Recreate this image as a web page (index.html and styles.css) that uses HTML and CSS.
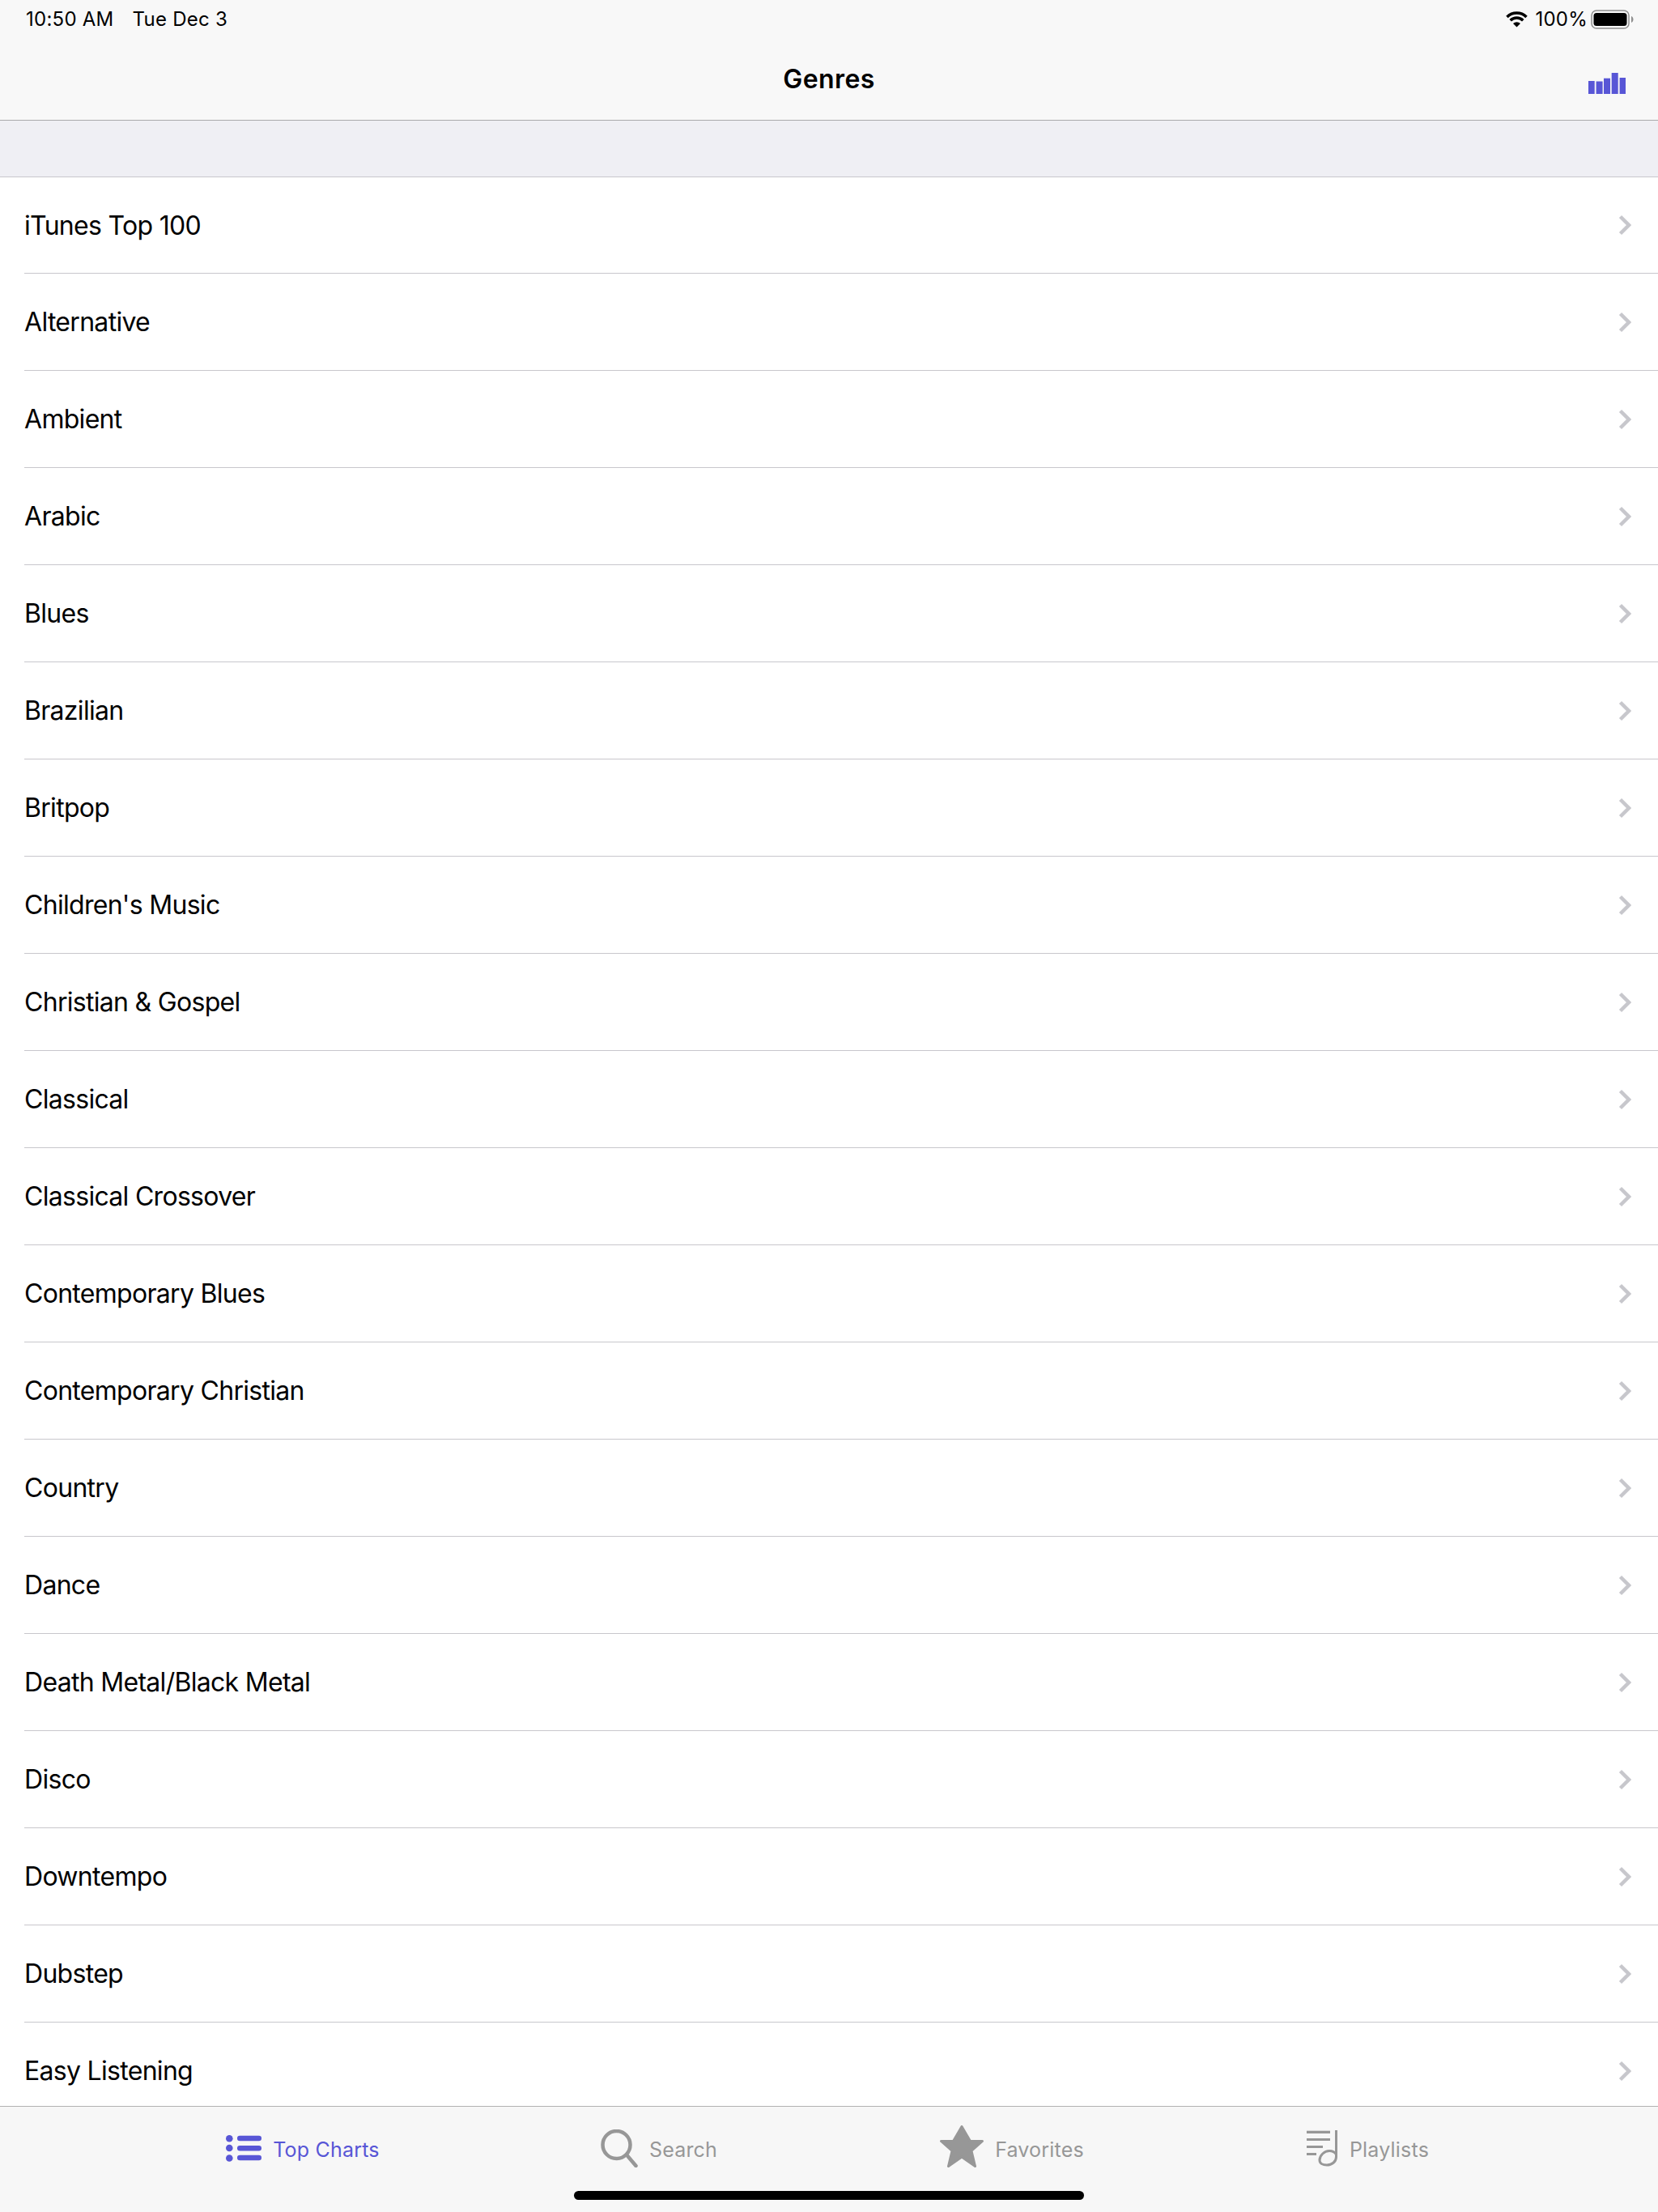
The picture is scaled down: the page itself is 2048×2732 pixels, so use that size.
FILE: index.html
```html
<!DOCTYPE html>
<html lang="en">
<head>
<meta charset="utf-8">
<title>Genres</title>
<link rel="stylesheet" href="styles.css">
</head>
<body>
<div class="app">
  <header class="nav">
    <div class="status">
      <div class="status-left"><span>10:50 AM</span><span>Tue Dec 3</span></div>
      <div class="status-right">
        <svg class="wifi" width="27" height="20" viewBox="0 0 27 20"><path class="wifi-arc" d="M1.500 7A17 17 0 0 1 25.500 7"/><path class="wifi-arc" d="M5.700 11.200A11 11 0 0 1 21.300 11.200"/><path d="M13.500 19.500 9 15A6.400 6.400 0 0 1 18 15Z"/></svg>
        <span class="pct">100%</span>
        <svg class="battery" width="54" height="24" viewBox="0 0 54 24"><rect class="batt-shell" x="1" y="1" width="46" height="22" rx="6"/><rect x="3.500" y="4" width="41" height="16" rx="3.500"/><path class="batt-nub" d="M50 8c1.500.6 2.500 2.200 2.500 4s-1 3.400-2.500 4z"/></svg>
      </div>
    </div>
    <div class="nav-bar">
      <h1 class="title">Genres</h1>
      <svg class="bars" width="46" height="26" viewBox="0 0 46 26"><rect x="0" y="10" width="7.700" height="16"/><rect x="9.600" y="10.500" width="8" height="15.500"/><rect x="19" y="6.700" width="8" height="19.300"/><rect x="28.700" y="0" width="8" height="26"/><rect x="38.600" y="6" width="7.400" height="20"/></svg>
    </div>
  </header>
  <div class="spacer"></div>
  <main class="list">
    <div class="row"><span>iTunes Top 100</span><svg class="chev" width="16" height="26" viewBox="0 0 16 26"><path d="M2.500 2.500 13 13 2.500 23.500"/></svg></div>
    <div class="row"><span>Alternative</span><svg class="chev" width="16" height="26" viewBox="0 0 16 26"><path d="M2.500 2.500 13 13 2.500 23.500"/></svg></div>
    <div class="row"><span>Ambient</span><svg class="chev" width="16" height="26" viewBox="0 0 16 26"><path d="M2.500 2.500 13 13 2.500 23.500"/></svg></div>
    <div class="row"><span>Arabic</span><svg class="chev" width="16" height="26" viewBox="0 0 16 26"><path d="M2.500 2.500 13 13 2.500 23.500"/></svg></div>
    <div class="row"><span>Blues</span><svg class="chev" width="16" height="26" viewBox="0 0 16 26"><path d="M2.500 2.500 13 13 2.500 23.500"/></svg></div>
    <div class="row"><span>Brazilian</span><svg class="chev" width="16" height="26" viewBox="0 0 16 26"><path d="M2.500 2.500 13 13 2.500 23.500"/></svg></div>
    <div class="row"><span>Britpop</span><svg class="chev" width="16" height="26" viewBox="0 0 16 26"><path d="M2.500 2.500 13 13 2.500 23.500"/></svg></div>
    <div class="row"><span>Children's Music</span><svg class="chev" width="16" height="26" viewBox="0 0 16 26"><path d="M2.500 2.500 13 13 2.500 23.500"/></svg></div>
    <div class="row"><span>Christian &amp; Gospel</span><svg class="chev" width="16" height="26" viewBox="0 0 16 26"><path d="M2.500 2.500 13 13 2.500 23.500"/></svg></div>
    <div class="row"><span>Classical</span><svg class="chev" width="16" height="26" viewBox="0 0 16 26"><path d="M2.500 2.500 13 13 2.500 23.500"/></svg></div>
    <div class="row"><span>Classical Crossover</span><svg class="chev" width="16" height="26" viewBox="0 0 16 26"><path d="M2.500 2.500 13 13 2.500 23.500"/></svg></div>
    <div class="row"><span>Contemporary Blues</span><svg class="chev" width="16" height="26" viewBox="0 0 16 26"><path d="M2.500 2.500 13 13 2.500 23.500"/></svg></div>
    <div class="row"><span>Contemporary Christian</span><svg class="chev" width="16" height="26" viewBox="0 0 16 26"><path d="M2.500 2.500 13 13 2.500 23.500"/></svg></div>
    <div class="row"><span>Country</span><svg class="chev" width="16" height="26" viewBox="0 0 16 26"><path d="M2.500 2.500 13 13 2.500 23.500"/></svg></div>
    <div class="row"><span>Dance</span><svg class="chev" width="16" height="26" viewBox="0 0 16 26"><path d="M2.500 2.500 13 13 2.500 23.500"/></svg></div>
    <div class="row"><span>Death Metal/Black Metal</span><svg class="chev" width="16" height="26" viewBox="0 0 16 26"><path d="M2.500 2.500 13 13 2.500 23.500"/></svg></div>
    <div class="row"><span>Disco</span><svg class="chev" width="16" height="26" viewBox="0 0 16 26"><path d="M2.500 2.500 13 13 2.500 23.500"/></svg></div>
    <div class="row"><span>Downtempo</span><svg class="chev" width="16" height="26" viewBox="0 0 16 26"><path d="M2.500 2.500 13 13 2.500 23.500"/></svg></div>
    <div class="row"><span>Dubstep</span><svg class="chev" width="16" height="26" viewBox="0 0 16 26"><path d="M2.500 2.500 13 13 2.500 23.500"/></svg></div>
    <div class="row"><span>Easy Listening</span><svg class="chev" width="16" height="26" viewBox="0 0 16 26"><path d="M2.500 2.500 13 13 2.500 23.500"/></svg></div>
  </main>
  <footer class="tabbar">
    <div class="tabs">
      <div class="tab tab-active">
        <svg class="ico" width="44" height="33" viewBox="0 0 44 33"><circle cx="4.300" cy="4.300" r="4.300"/><circle cx="4.300" cy="16" r="4.300"/><circle cx="4.300" cy="28.500" r="4.300"/><rect x="14" y=".7" width="30" height="6.600" rx="3.300"/><rect x="14" y="13" width="30" height="6.600" rx="3.300"/><rect x="14" y="24.700" width="30" height="6.600" rx="3.300"/></svg>
        <span class="tab-label">Top Charts</span>
      </div>
      <div class="tab">
        <svg class="ico" width="46" height="47" viewBox="0 0 46 47"><circle class="line" cx="19.500" cy="19" r="17"/><path class="line" d="M32.500 32 43.500 45"/></svg>
        <span class="tab-label">Search</span>
      </div>
      <div class="tab">
        <svg class="ico ico-star" width="54" height="52" viewBox="0 0 54 52"><polygon class="star" points="27,1.500 37.500,19.500 52.500,19.500 39,31.500 43.500,50.500 27,39 10.500,50.500 15,31.500 1.500,19.500 16.500,19.500"/></svg>
        <span class="tab-label">Favorites</span>
      </div>
      <div class="tab">
        <svg class="ico" width="39" height="45" viewBox="0 0 39 45"><rect x="0" y=".7" width="29" height="3.300"/><rect x="0" y="10" width="29" height="3"/><rect x="0" y="19" width="20" height="3"/><rect x="0" y="28" width="12" height="3"/><path class="line-thin" d="M36.500 0V33C36.500 39 31 43 25 43C20 43 16 41 16 37C16 31 22 25.500 28 25.500C32 25.500 35 27.500 36.500 30"/></svg>
        <span class="tab-label">Playlists</span>
      </div>
    </div>
    <div class="home"></div>
  </footer>
</div>
</body>
</html>
```

FILE: styles.css
```css
* { box-sizing: border-box; }
html, body { margin: 0; padding: 0; }
body { font-family: Inter, "Liberation Sans", sans-serif; color: #000; background: #fff; }
.app { width: 2048px; height: 2732px; display: flex; flex-direction: column; overflow: hidden; }

.nav { height: 149px; background: #f8f8f8; border-bottom: 1px solid #a9a9ab; flex: none; }
.status { height: 48px; display: flex; justify-content: space-between; padding: 8px 29px 0 32px; font-size: 24px; line-height: 32px; letter-spacing: .25px; }
.status-left { display: flex; gap: 23px; }
.status-right { display: flex; align-items: center; height: 32px; }
.wifi { margin-right: 9px; }
.pct { margin-right: 4px; }
.batt-shell { fill: none; stroke: #8f8f8f; stroke-width: 1.5px; }
.batt-nub { fill: #8f8f8f; }
.wifi-arc { fill: none; stroke: #000; stroke-width: 3.5px; }
.nav-bar { height: 100px; display: flex; align-items: center; justify-content: center; position: relative; }
.title { margin: 0; font-size: 32px; font-weight: 600; line-height: 44px; letter-spacing: .4px; }
.bars { position: absolute; right: 40px; top: 42px; fill: #5856d6; }

.spacer { height: 70px; flex: none; background: #efeff4; border-bottom: 1px solid #c8c7cc; }

.list { flex: 1; min-height: 0; overflow: hidden; background: #fff; }
.row { height: 120px; margin-left: 30px; padding-right: 33px; display: flex; align-items: center; justify-content: space-between; border-bottom: 1px solid #c8c7cc; font-size: 32px; letter-spacing: -.7px; }
.row:first-child { height: 119px; }
.chev { fill: none; stroke: #c7c7cc; stroke-width: 4.5px; }

.tabbar { height: 131px; flex: none; background: #f7f7f7; border-top: 1px solid #b2b2b2; position: relative; }
.tabs { display: grid; grid-template-columns: 440px 440px 432px 447px; padding-left: 154px; height: 103px; }
.tab { display: flex; align-items: center; justify-content: center; gap: 14px; font-size: 25px; letter-spacing: .2px; color: #979797; }
.tab-label { padding-top: 2px; }
.tab .ico { fill: #979797; }
.tab-active { color: #5856d6; }
.tab-active .ico { fill: #5856d6; }
.ico-star { margin-bottom: 5px; }
.line { fill: none; stroke: #979797; stroke-width: 4.5px; stroke-linecap: round; }
.line-thin { fill: none; stroke: #979797; stroke-width: 3px; }
.star { stroke: #979797; stroke-width: 3px; stroke-linejoin: round; }
.home { position: absolute; left: 709px; bottom: 15px; width: 630px; height: 11px; border-radius: 6px; background: #000; }
```
